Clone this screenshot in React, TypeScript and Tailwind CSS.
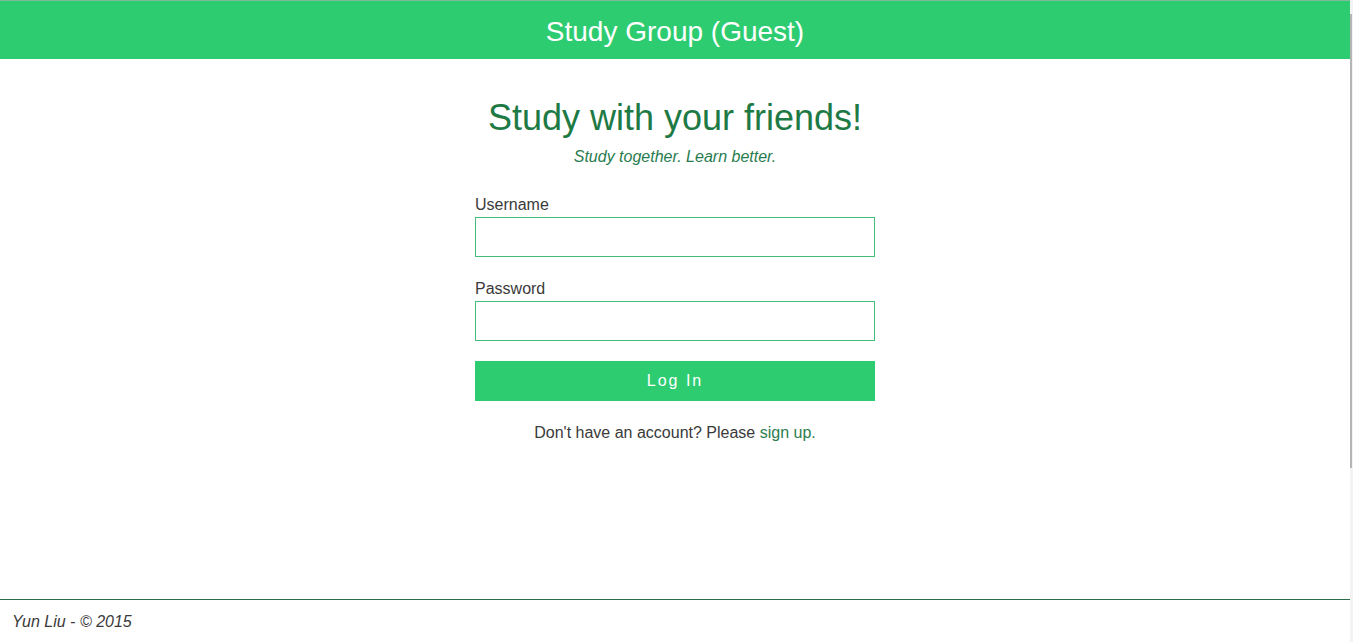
import React from "react";

export default function App() {
  return (
    <div className="flex h-[642px] w-full overflow-hidden bg-white" style={{ fontFamily: '"Liberation Sans", Arial, sans-serif' }}>
      <div className="flex flex-1 flex-col">
        <header className="flex h-[59px] items-center justify-center border-t border-[#7fb89a] bg-[#2ecc71] pt-[3px]">
          <h1 className="text-[28px] leading-[32px] text-white">Study Group (Guest)</h1>
        </header>
        <main className="flex flex-1 flex-col items-center">
          <h2 className="mt-[39px] text-[36px] leading-[40px] text-[#1e7a45]">Study with your friends!</h2>
          <p className="mt-[9px] text-[16px] leading-[20px] italic text-[#2a7c4f]">Study together. Learn better.</p>
          <form className="mt-[28px] flex w-[400px] flex-col" onSubmit={(e) => e.preventDefault()}>
            <label className="text-[16px] leading-[20px] text-[#3a3a3a]">Username</label>
            <input type="text" className="mt-[2px] h-[40px] w-full border border-[#45bd7a] bg-white px-2 outline-none" />
            <label className="mt-[22px] text-[16px] leading-[20px] text-[#3a3a3a]">Password</label>
            <input type="password" className="mt-[2px] h-[40px] w-full border border-[#45bd7a] bg-white px-2 outline-none" />
            <button type="submit" className="mt-[20px] h-[40px] w-full bg-[#2ecc71] text-[16px] tracking-[2px] text-white">Log In</button>
          </form>
          <p className="mt-[22px] text-[16px] leading-[20px] text-[#3a3a3a]">
            Don't have an account? Please <a href="#" className="text-[#2b7d4e]">sign up.</a>
          </p>
        </main>
        <footer className="h-[43px] border-t border-[#2b6b4b] pl-[12px] pt-[12px]">
          <p className="text-[16px] leading-[20px] italic text-[#3a3a3a]">Yun Liu - © 2015</p>
        </footer>
      </div>
      <div className="flex w-[3px] flex-col bg-[#f3f3f3]">
        <div className="mt-[14px] h-[454px] w-[2px] bg-[#b5b5b5]" />
      </div>
    </div>
  );
}
